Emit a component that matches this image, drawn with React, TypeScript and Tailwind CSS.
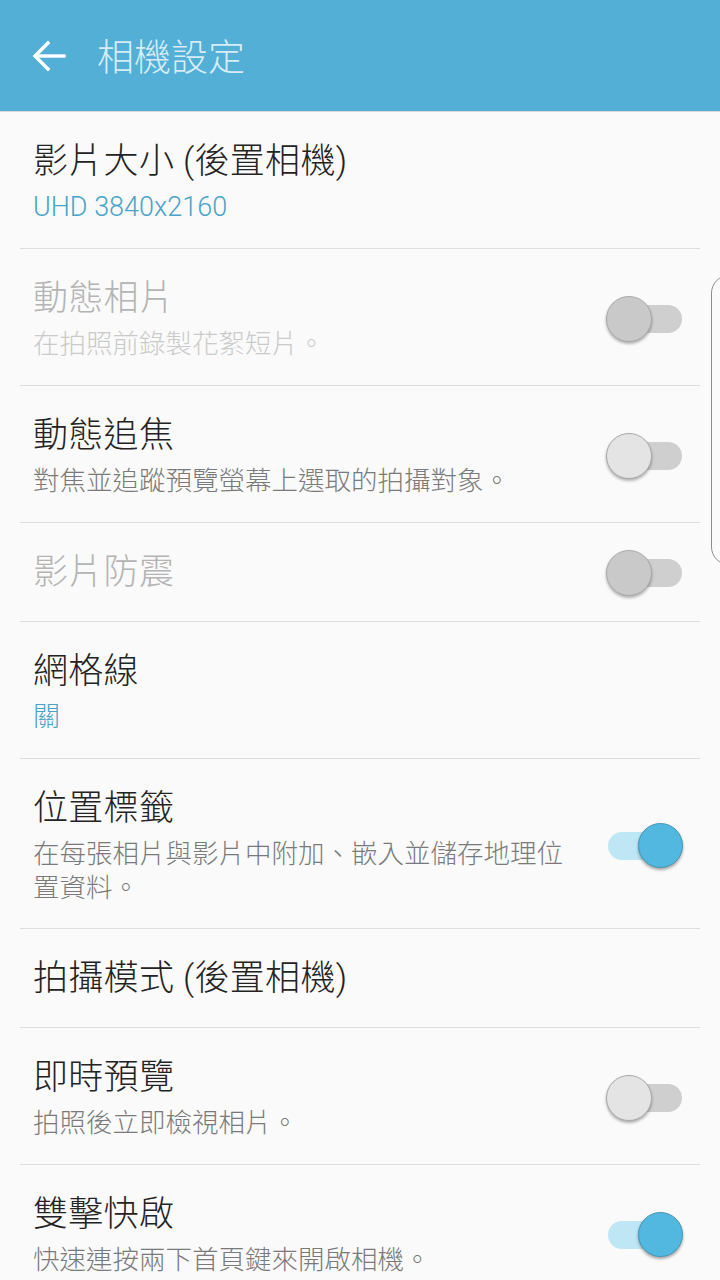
import React from 'react';

const FONT = { fontFamily: 'Roboto, "Noto Sans CJK TC", "Noto Sans", sans-serif' };

type Row = {
    title: string;
    sub?: string;
    subBlue?: boolean;
    disabled?: boolean;
    wraps?: boolean;
    toggle?: 'off' | 'on' | 'disabled';
};

const rows: Row[] = [
    { title: '影片大小 (後置相機)', sub: 'UHD 3840x2160', subBlue: true },
    { title: '動態相片', sub: '在拍照前錄製花絮短片。', disabled: true, toggle: 'disabled' },
    { title: '動態追焦', sub: '對焦並追蹤預覽螢幕上選取的拍攝對象。', toggle: 'off' },
    { title: '影片防震', disabled: true, toggle: 'disabled' },
    { title: '網格線', sub: '關', subBlue: true },
    { title: '位置標籤', sub: '在每張相片與影片中附加、嵌入並儲存地理位置資料。', wraps: true, toggle: 'on' },
    { title: '拍攝模式 (後置相機)' },
    { title: '即時預覽', sub: '拍照後立即檢視相片。', toggle: 'off' },
    { title: '雙擊快啟', sub: '快速連按兩下首頁鍵來開啟相機。', toggle: 'on' },
];

function Toggle({ state }: { state: 'off' | 'on' | 'disabled' }) {
    const on = state === 'on';
    return (
        <div className="relative w-[78px] h-[44px] shrink-0 flex items-center">
            <div className={`ml-[2px] w-[74px] h-[28px] rounded-full ${on ? 'bg-[#bfe6f4]' : 'bg-[#cfcfcf]'}`} />
            {on ? (
                <div className="absolute right-[1px] top-[-1px] w-[45px] h-[45px] rounded-full bg-[#52b8df] border border-[#4596b6] shadow-[0_2px_3px_rgba(0,0,0,0.35)]" />
            ) : (
                <div
                    className={`absolute left-0 top-[-1px] w-[46px] h-[46px] rounded-full border border-[#a9a9a9] shadow-[0_2px_3px_rgba(0,0,0,0.3)] ${
                        state === 'disabled' ? 'bg-[#c9c9c9]' : 'bg-[#e4e4e4]'
                    }`}
                />
            )}
        </div>
    );
}

export default function App() {
    return (
        <div className="relative w-[720px] h-[1280px] overflow-hidden bg-[#fafafa]" style={FONT}>
            {/* App bar */}
            <div className="h-[111px] bg-[#53afd6] flex items-center">
                <svg className="ml-[31px] w-[36px] h-[36px]" viewBox="0 0 36 36" fill="none" stroke="#ffffff" strokeWidth="3.4" strokeLinecap="square">
                    <path d="M33 18H5" />
                    <path d="M17 5L4 18l13 13" />
                </svg>
                <span className="ml-[30px] text-[37px] leading-none font-light text-[#d6edf7] pt-[5px]">相機設定</span>
            </div>
            <div className="h-[1px] bg-[#dadada]" />

            <div className="mx-[20px]">
                {rows.map((r) => (
                    <div
                        key={r.title}
                        className={`flex items-center justify-between border-b border-[#dedede] pl-[13px] pr-[16px] pt-[28px] ${
                            r.wraps ? 'pb-[23px]' : r.sub ? 'pb-[24px]' : 'pb-[26px]'
                        }`}
                    >
                        <div className="max-w-[545px]">
                            <div
                                className={`text-[35px] leading-[44px] font-light tracking-[0.3px] ${
                                    r.disabled ? 'text-[#b4b4b4]' : 'text-[#232323]'
                                }`}
                            >
                                {r.title}
                            </div>
                            {r.sub && (
                                <div
                                    className={`mt-[6px] leading-[34px] font-light ${
                                        r.subBlue
                                            ? 'text-[27px] text-[#4aa3c8]'
                                            : r.disabled
                                            ? 'text-[26.5px] text-[#cacaca]'
                                            : 'text-[26.5px] text-[#7a7a7a]'
                                    }`}
                                >
                                    {r.sub}
                                </div>
                            )}
                        </div>
                        {r.toggle && <Toggle state={r.toggle} />}
                    </div>
                ))}
            </div>

            {/* edge panel handle */}
            <div className="absolute left-[711px] top-[275px] w-[30px] h-[290px] rounded-l-[18px] border border-[#8c8c8c]" />
        </div>
    );
}
